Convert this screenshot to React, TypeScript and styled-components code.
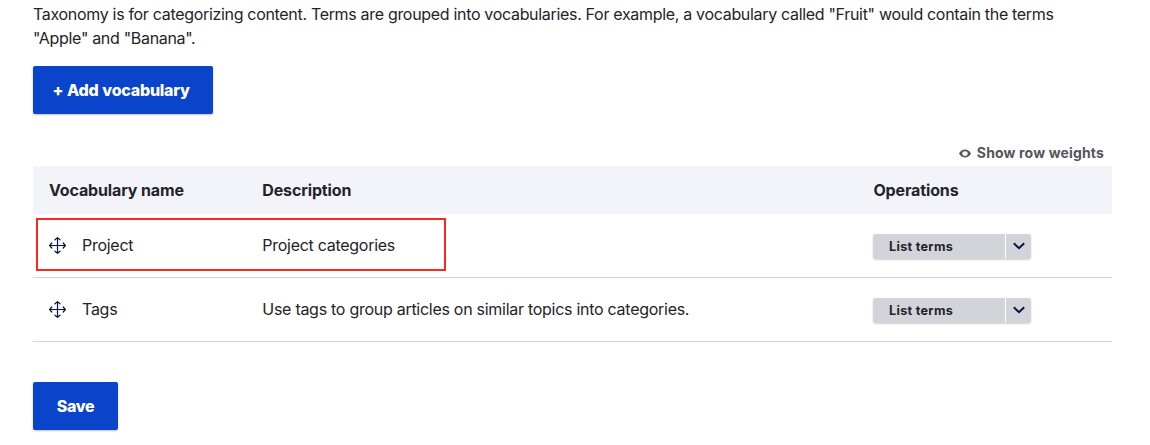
import React from 'react';
import styled, { createGlobalStyle } from 'styled-components';

const Global = createGlobalStyle`
  * { box-sizing: border-box; }
  html, body { margin: 0; background: #fff; overflow: hidden; }
  body { font-family: Inter, "Liberation Sans", sans-serif; font-size: 16px; line-height: 24px; color: #232429; }
`;
const Page = styled.main`
  width: 1150px;
  height: 445px;
  padding: 2px 38px 0 33px;
  overflow: hidden;
`;
const Help = styled.p`
  margin: 0 0 16px;
  letter-spacing: -0.317px;
`;
const PrimaryButton = styled.button<{ $width: number }>`
  width: ${(p) => p.$width}px;
  height: 48px;
  display: flex;
  align-items: center;
  justify-content: center;
  padding: 0;
  border: 0;
  border-radius: 2px;
  background: #0a44cb;
  box-shadow: 0 1px 2px rgba(0, 0, 0, 0.25);
  color: #fff;
  font: 800 16px/16px Inter, "Liberation Sans", sans-serif;
  letter-spacing: -0.3px;
`;
const AddButton = styled(PrimaryButton)`
  justify-content: flex-start;
  padding-left: 19.5px;
  letter-spacing: -0.25px;
  word-spacing: 0.6px;
`;
const WeightsBar = styled.div`
  display: flex;
  justify-content: flex-end;
  padding: 28px 8px 2px;
`;
const WeightsToggle = styled.button`
  display: flex;
  align-items: center;
  gap: 6px;
  padding: 0;
  border: 0;
  background: none;
  color: #55565b;
  font: 700 14px/22px Inter, "Liberation Sans", sans-serif;
  letter-spacing: 0.15px;
`;
const Table = styled.div`
  margin-bottom: 40px;
`;
const Row = styled.div`
  display: grid;
  grid-template-columns: 213.3px 610.7px 1fr;
  align-items: center;
  height: 64px;
  padding-left: 16px;
  border-bottom: 1px solid #d3d4d9;
  letter-spacing: -0.275px;
`;
const HeadRow = styled(Row)`
  grid-template-columns: 213.3px 611.1px 1fr;
  height: 48px;
  border: 0;
  background: #f3f4f9;
  font-weight: 700;
  letter-spacing: -0.14px;
`;
const Name = styled.div`
  display: flex;
  align-items: center;
  gap: 16px;
`;
const Text = styled.span`
  padding-bottom: 2px;
`;
const SplitButton = styled.div`
  display: flex;
  gap: 1px;
  width: 158px;
  height: 25px;
  margin-top: 2px;
  border-radius: 2px;
  box-shadow: 0 1px 2px rgba(0, 0, 0, 0.18);
`;
const MainAction = styled.button`
  width: 132px;
  padding: 0 0 0 16px;
  border: 0;
  border-radius: 2px 0 0 2px;
  background: #d3d4d9;
  color: #232429;
  text-align: left;
  font: 700 12.64px/25px Inter, "Liberation Sans", sans-serif;
  letter-spacing: 0.3px;
`;
const Toggle = styled.button`
  display: flex;
  align-items: center;
  flex: 1;
  padding: 0 0 0 6.2px;
  border: 0;
  border-radius: 0 2px 2px 0;
  background: #d3d4d9;
`;
const Highlight = styled.div`
  position: absolute;
  left: 36px;
  top: 218px;
  width: 410px;
  height: 53px;
  border: 2px solid #fb2a20;
`;

const MoveIcon = () => (
  <svg width="17" height="17" viewBox="0 0 17 17" fill="none" stroke="#071437" strokeWidth="1.2" strokeLinecap="round" strokeLinejoin="round" aria-hidden="true">
    <path d="M8.5 .7V16.3M.7 8.5H16.3M6 2.8L8.5 .6L11 2.8M6 14.2L8.5 16.4L11 14.2M2.8 6L.6 8.5L2.8 11M14.2 6L16.4 8.5L14.2 11" />
  </svg>
);
const EyeIcon = () => (
  <svg width="12" height="9" viewBox="0 0 12 9" fill="#55565b" fillRule="evenodd" aria-hidden="true">
    <path d="M0 4.5C1.5 1.6 3.5.5 6 .5S10.5 1.6 12 4.5C10.5 7.4 8.5 8.5 6 8.5S1.5 7.4 0 4.5ZM6 2.2A2.7 2.3 0 0 0 6 6.8A2.7 2.3 0 0 0 6 2.2Z" />
  </svg>
);
const Chevron = () => (
  <svg width="14" height="9" viewBox="0 0 14 9" fill="none" stroke="#071437" strokeWidth="1.9" aria-hidden="true">
    <path d="M1.8 1.3l5.2 5 5.2-5" />
  </svg>
);

const vocabularies = [
  { name: 'Project', description: 'Project categories' },
  { name: 'Tags', description: 'Use tags to group articles on similar topics into categories.' },
];

export default function App() {
  return (
    <Page>
      <Global />
      <Help>
        Taxonomy is for categorizing content. Terms are grouped into vocabularies. For example, a vocabulary called "Fruit" would contain the terms<br />
        "Apple" and "Banana".
      </Help>
      <AddButton $width={180}>+ Add vocabulary</AddButton>
      <WeightsBar>
        <WeightsToggle><EyeIcon />Show row weights</WeightsToggle>
      </WeightsBar>
      <Table>
        <HeadRow><span>Vocabulary name</span><span>Description</span><span>Operations</span></HeadRow>
        {vocabularies.map((v) => (
          <Row key={v.name}>
            <Name><MoveIcon /><Text>{v.name}</Text></Name>
            <Text>{v.description}</Text>
            <SplitButton>
              <MainAction>List terms</MainAction>
              <Toggle aria-label="List additional actions"><Chevron /></Toggle>
            </SplitButton>
          </Row>
        ))}
      </Table>
      <PrimaryButton $width={85}>Save</PrimaryButton>
      <Highlight />
    </Page>
  );
}
